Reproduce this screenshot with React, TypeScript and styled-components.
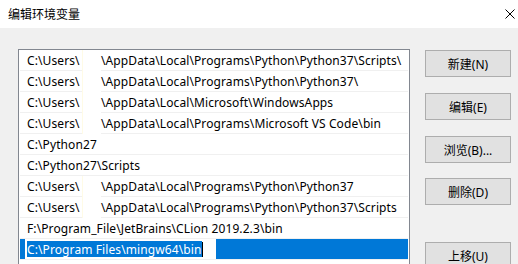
import React from "react";
import styled, {createGlobalStyle} from "styled-components";

const GlobalStyle = createGlobalStyle`
    html, body {
        margin: 0;
        padding: 0;
        background: #f0f0f0;
        overflow: hidden;
    }
    * {
        box-sizing: border-box;
    }
`;

const uiFont = `"Noto Sans", "Noto Sans CJK SC", sans-serif`;

const Window = styled.div`
    width: 518px;
    height: 264px;
    background: #f0f0f0;
    font-family: ${uiFont};
    font-size: 12px;
    color: #000;
    overflow: hidden;
`;

const TitleBar = styled.div`
    height: 28px;
    background: #fff;
    display: flex;
    align-items: center;
    justify-content: space-between;
    padding: 0 3px 0 8px;
`;

const Title = styled.span`
    font-family: "Noto Sans CJK SC", sans-serif;
    font-size: 12px;
    line-height: 1;
`;

const CloseIcon = styled.svg`
    width: 10px;
    height: 10px;
`;

const Content = styled.div`
    display: flex;
    align-items: flex-start;
    padding: 21px 0 0 18px;
    gap: 15px;
`;

const ListBox = styled.div`
    width: 392px;
    height: 240px;
    border: 1px solid #828790;
    border-bottom: none;
    background: #fff;
    padding: 0 1px;
`;

const Row = styled.div<{ selected?: boolean }>`
    height: 21px;
    display: flex;
    align-items: stretch;
    border-bottom: 1px solid #f0f0f0;
    background: ${p => p.selected ? "#0078d7" : "#fff"};
    padding-left: ${p => p.selected ? "5px" : "7px"};
    white-space: nowrap;
    letter-spacing: 0.1px;
`;

const Cell = styled.span<{ width?: number }>`
    display: flex;
    align-items: center;
    line-height: 20px;
    padding-top: 2px;
    width: ${p => p.width ? `${p.width}px` : "auto"};
`;

const Redacted = styled.span`
    width: 19px;
    margin-bottom: -1px;
    background: #fff;
    border-left: 1px solid #fffbe6;
`;

const EditBox = styled.div`
    width: 191px;
    height: 20px;
    background: #fff;
    border: 1px solid #fff;
    display: flex;
    align-items: center;
    padding-left: 1px;
`;

const Selection = styled.span`
    background: #0078d7;
    color: #fff;
    height: 16px;
    padding-top: 1px;
    display: flex;
    align-items: center;
`;

const Caret = styled.span`
    width: 1px;
    height: 15px;
    background: #000;
`;

const ButtonColumn = styled.div`
    display: flex;
    flex-direction: column;
    padding-top: 1px;
`;

const Button = styled.div<{ space?: number }>`
    width: 86px;
    height: 27px;
    margin-bottom: ${p => p.space ?? 16}px;
    background: #e1e1e1;
    border: 1px solid #adadad;
    display: flex;
    align-items: center;
    justify-content: center;
    padding-top: 1px;
    font-family: ${uiFont};
    font-size: 12px;
`;

const AppData = "\\AppData\\Local";

const paths: { user?: boolean; text: string }[] = [
  {user: true, text: AppData + "\\Programs\\Python\\Python37\\Scripts\\"},
  {user: true, text: AppData + "\\Programs\\Python\\Python37\\"},
  {user: true, text: AppData + "\\Microsoft\\WindowsApps"},
  {user: true, text: AppData + "\\Programs\\Microsoft VS Code\\bin"},
  {text: "C:\\Python27"},
  {text: "C:\\Python27\\Scripts"},
  {user: true, text: AppData + "\\Programs\\Python\\Python37"},
  {user: true, text: AppData + "\\Programs\\Python\\Python37\\Scripts"},
  {text: "F:\\Program_File\\JetBrains\\CLion 2019.2.3\\bin"},
];

const buttons = [
  {label: "新建(N)", space: 16},
  {label: "编辑(E)", space: 16},
  {label: "浏览(B)...", space: 15},
  {label: "删除(D)", space: 37},
  {label: "上移(U)", space: 16},
];

const App = () => {
  return (
    <Window>
      <GlobalStyle/>
      <TitleBar>
        <Title>编辑环境变量</Title>
        <CloseIcon viewBox="0 0 10 10">
          <path d="M0.5 0.5 L9.5 9.5 M9.5 0.5 L0.5 9.5" stroke="#000" strokeWidth="1" fill="none"/>
        </CloseIcon>
      </TitleBar>
      <Content>
        <ListBox>
          {
            paths.map((p, i) => (
              <Row key={i}>
                {
                  p.user ? (
                    <>
                      <Cell width={55}>C:\Users\</Cell>
                      <Redacted/>
                      <Cell>{p.text}</Cell>
                    </>
                  ) : (
                    <Cell>{p.text}</Cell>
                  )
                }
              </Row>
            ))
          }
          <Row selected>
            <EditBox>
              <Selection>C:\Program Files\mingw64\bin</Selection>
              <Caret/>
            </EditBox>
          </Row>
        </ListBox>
        <ButtonColumn>
          {
            buttons.map((b, i) => (
              <Button key={i} space={b.space}>{b.label}</Button>
            ))
          }
        </ButtonColumn>
      </Content>
    </Window>
  );
};

export default App;
